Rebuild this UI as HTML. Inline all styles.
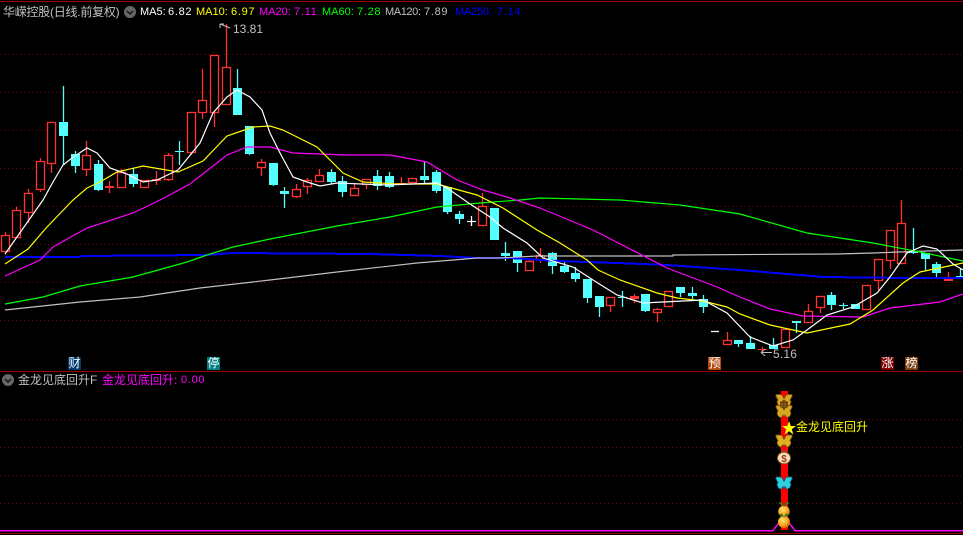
<!DOCTYPE html>
<html><head><meta charset="utf-8"><title>华嵘控股</title>
<style>
html,body{margin:0;padding:0;background:#000;width:963px;height:535px;overflow:hidden}
body{position:relative;font-family:"Liberation Sans","WenQuanYi Zen Hei","Noto Sans CJK SC",sans-serif}
svg.c{position:absolute;left:0;top:0}
.t{position:absolute;white-space:nowrap;font-size:12px;line-height:14px;color:#c0c0c0}
.n{position:absolute;white-space:nowrap;font-size:11px;line-height:14px}
.v{letter-spacing:.7px}
.b{position:absolute;width:13px;height:13px;color:#fff;font-size:12px;line-height:13px;text-align:center;top:357px}
</style></head><body>
<svg class="c" width="963" height="535" viewBox="0 0 963 535" xmlns="http://www.w3.org/2000/svg">
<defs>
<radialGradient id="o" cx="40%" cy="35%" r="70%"><stop offset="0" stop-color="#ffe070"/><stop offset=".6" stop-color="#f8a820"/><stop offset="1" stop-color="#d06000"/></radialGradient>
<g id="bf"><path d="M0-2L-2-6-4-6.500-8-6.500-8-4.500-6-1-7 1-6 4-3 6-1 3 0 5 1 3 3 6 6 4 7 1 6-1 8-4.500 8-6.500 4-6.500 2-6Z"/></g>
</defs>
<g shape-rendering="crispEdges">
<path d="M0 1.500H963M0 371.500H963" stroke="#a00000" fill="none"/>
<path d="M0 533.500H963" stroke="#a00000" fill="none"/>
<path d="M0 54.500H963M0 92.500H963M0 130.500H963M0 168.500H963M0 206.500H963M0 244.500H963M0 282.500H963M0 320.500H963M0 419.500H963M0 447.500H963M0 475.500H963M0 503.500H963" stroke="#7a0000" stroke-dasharray="1 3" fill="none"/>
</g>
<!-- red wicks -->
<path stroke="#ff3232" stroke-width="1.300" fill="none" d="M5.500 232V251M16.500 207V237M28.500 189V223M40.500 158V192M51.500 122V173M86.500 141V176M109.500 181V193M121.500 169V187M144.500 180V188M156.500 171V185M168.500 153V181M191.500 112V155M202.500 69V119M214.500 55V127M226.500 24V104M261.500 159V176M296.500 184V198M307.500 178V194M319.500 169V181M354.500 184V196M366.500 179V189M401.500 177V184M482.500 193V225M529.500 259V270M540.500 248V263M610.500 297V312M634.500 294V303M657.500 308V322M727.500 332V344M762.500 347V353M808.500 304V322M820.500 296V313M878.500 259V290M890.500 230V269M901.500 200V263M948.500 272V281"/>
<!-- red bodies -->
<g stroke="#ff3232" stroke-width="1.300" fill="#000">
<rect x="1.500" y="235.500" width="8" height="16"/><rect x="12.500" y="210.500" width="8" height="27"/><rect x="24.500" y="193.500" width="8" height="19"/><rect x="36.500" y="161.500" width="8" height="28"/><rect x="47.500" y="122.500" width="8" height="41"/>
<rect x="82.500" y="155.500" width="8" height="14"/><rect x="117.500" y="172.500" width="8" height="15"/><rect x="140.500" y="180.500" width="8" height="7"/><rect x="164.500" y="155.500" width="8" height="24"/>
<rect x="187.500" y="112.500" width="8" height="40"/><rect x="198.500" y="100.500" width="8" height="12"/><rect x="210.500" y="55.500" width="8" height="57"/><rect x="222.500" y="67.500" width="8" height="37"/><rect x="257.500" y="162.500" width="8" height="5"/>
<rect x="292.500" y="189.500" width="8" height="7"/><rect x="303.500" y="180.500" width="8" height="6"/><rect x="315.500" y="175.500" width="8" height="6"/><rect x="350.500" y="188.500" width="8" height="7"/><rect x="362.500" y="179.500" width="8" height="5"/><rect x="408.500" y="178.500" width="8" height="4"/>
<rect x="478.500" y="206.500" width="8" height="19"/><rect x="525.500" y="261.500" width="8" height="9"/><rect x="536.500" y="255.500" width="8" height="4"/><rect x="606.500" y="297.500" width="8" height="8"/><rect x="653.500" y="309.500" width="8" height="3"/><rect x="664.500" y="291.500" width="8" height="15"/>
<rect x="723.500" y="340.500" width="8" height="4"/><rect x="781.500" y="329.500" width="8" height="18"/><rect x="804.500" y="311.500" width="8" height="11"/><rect x="816.500" y="296.500" width="8" height="11"/><rect x="862.500" y="285.500" width="8" height="24"/><rect x="874.500" y="259.500" width="8" height="21"/><rect x="886.500" y="230.500" width="8" height="30"/><rect x="897.500" y="223.500" width="8" height="40"/>
</g>
<g shape-rendering="crispEdges">
<g fill="#ff3232"><rect x="105" y="186" width="9" height="2"/><rect x="152" y="179" width="9" height="2"/><rect x="397" y="183" width="9" height="1"/><rect x="630" y="296" width="9" height="3"/><rect x="758" y="349" width="9" height="1"/><rect x="944" y="279" width="9" height="2"/></g>
<g fill="#54ffff">
<rect x="59" y="122" width="9" height="14"/><rect x="71" y="154" width="9" height="12"/><rect x="94" y="164" width="9" height="26"/><rect x="129" y="174" width="9" height="10"/><rect x="175" y="151" width="9" height="1"/><rect x="233" y="88" width="9" height="27"/><rect x="245" y="126" width="9" height="28"/><rect x="269" y="163" width="9" height="22"/>
<rect x="280" y="191" width="9" height="3"/><rect x="327" y="172" width="9" height="10"/><rect x="338" y="181" width="9" height="11"/><rect x="373" y="176" width="9" height="10"/><rect x="385" y="176" width="9" height="11"/><rect x="420" y="176" width="9" height="4"/><rect x="432" y="172" width="9" height="19"/><rect x="443" y="187" width="9" height="25"/><rect x="455" y="214" width="9" height="5"/>
<rect x="490" y="208" width="9" height="32"/><rect x="501" y="253" width="9" height="3"/><rect x="513" y="251" width="9" height="12"/><rect x="548" y="253" width="9" height="13"/><rect x="560" y="266" width="9" height="6"/><rect x="571" y="273" width="9" height="6"/><rect x="583" y="279" width="9" height="19"/><rect x="595" y="296" width="9" height="11"/><rect x="618" y="297" width="9" height="1"/>
<rect x="641" y="294" width="9" height="17"/><rect x="676" y="287" width="9" height="6"/><rect x="688" y="293" width="9" height="3"/><rect x="699" y="299" width="9" height="8"/><rect x="734" y="340" width="9" height="4"/><rect x="746" y="343" width="9" height="6"/><rect x="769" y="345" width="9" height="4"/><rect x="792" y="321" width="9" height="2"/>
<rect x="827" y="295" width="9" height="10"/><rect x="839" y="305" width="9" height="1"/><rect x="851" y="304" width="9" height="5"/><rect x="909" y="252" width="9" height="1"/><rect x="921" y="253" width="9" height="6"/><rect x="932" y="264" width="9" height="9"/><rect x="956" y="276" width="7" height="1"/>
</g>
</g>
<!-- cyan wicks -->
<path stroke="#54ffff" stroke-width="1.300" fill="none" d="M63.500 86V165M75.500 151V173M98.500 160V191M133.500 168V187M179.500 141V165M237.500 69V115M249.500 126V155M273.500 163V186M284.500 187V208M331.500 169V184M342.500 176V197M377.500 170V190M389.500 172V188M424.500 162V183M436.500 170V193M447.500 187V214M459.500 211V224M494.500 208V240M505.500 242V261M517.500 251V272M552.500 252V274M564.500 262V273M575.500 267V282M587.500 279V303M599.500 296V317M622.500 291V307M645.500 294V312M680.500 287V297M692.500 287V299M703.500 295V313M738.500 340V347M750.500 336V349M773.500 338V349M796.500 321V333M831.500 292V310M843.500 303V309M855.500 304V309M913.500 228V254M925.500 253V270M936.500 262V278M960.500 268V278"/>
<path d="M467 221.500H476M471.500 216V226M711 331.500H719" stroke="#fff" stroke-width="1.300" fill="none"/>
<!-- MAs -->
<g fill="none" stroke-width="1.200">
<polyline stroke="#0000ff" stroke-width="2" shape-rendering="crispEdges" points="5,257 80,257 82,256 207,255 232,253 370,254 440,256 477,258 510,258 557,261 617,263 667,265 740,270 823,277 907,278 963,278"/>
<polyline stroke="#c0c0c0" points="5,310 80,302 140,297 200,288 270,280 337,272 417,263 477,258 500,258 537,256 673,256 673,255 837,254 873,253 927,251 963,250"/>
<polyline stroke="#00ff00" points="5,304 43,297 80,286 133,277 187,262 207,255 233,247 270,239 337,226 390,217 437,207 480,203 520,200 540,198 620,200 680,205 740,214 807,233 873,243 920,252 963,261"/>
<polyline stroke="#ff00ff" points="5,276 40,260 53,247 87,228 133,213 160,200 190,184 227,155 247,147 270,147 293,153 347,155 390,155 427,162 457,180 483,190 510,198 540,208 593,230 667,268 717,287 740,297 770,309 803,316 863,317 890,308 940,302 963,294"/>
<polyline stroke="#ffff00" points="5,264 28,249 47,227 73,200 87,188 100,182 117,172 143,166 178,172 203,161 227,136 253,127 270,126 283,130 317,147 343,173 363,182 397,184 437,184 477,195 503,208 537,230 560,243 587,260 598,270 620,280 657,293 677,298 703,301 727,307 740,314 770,325 807,333 850,324 873,310 903,283 920,272 963,263"/>
<polyline stroke="#ffffff" points="5,254 43,200 53,182 63,165 72,158 87,148 97,153 110,168 127,174 143,182 157,180 178,170 200,143 213,113 227,97 237,90 250,97 262,110 270,133 280,153 293,177 307,182 320,186 337,183 387,185 437,183 447,188 470,204 490,217 503,228 527,243 543,258 573,267 593,280 617,295 643,303 663,302 703,300 727,313 750,337 773,346 793,340 807,330 827,315 853,307 877,293 890,277 907,253 923,246 937,249 953,264 963,270"/>
</g>
<!-- arrows -->
<path d="M220 24L230 28M220 24V28M220 24H224M761 352.500H772M761 352.500L765 349M761 352.500L765 356" stroke="#c0c0c0" fill="none"/>
<!-- header circles -->
<circle cx="130" cy="12" r="6" fill="#666"/><path d="M127 11l3 3 3-3" stroke="#111" stroke-width="1.500" fill="none"/>
<circle cx="8" cy="380" r="6" fill="#666"/><path d="M5 379l3 3 3-3" stroke="#111" stroke-width="1.500" fill="none"/>
<!-- lower indicator -->
<g shape-rendering="crispEdges"><rect x="781" y="391" width="7" height="139" fill="#ff0000"/>
<polyline points="0,530.500 773,530.500 778,524 790,524 795,530.500 963,530.500" fill="none" stroke="#ff00ff" stroke-width="1.500"/></g>
<use href="#bf" x="784" y="401" fill="#d8a820" stroke="#7a4c10" stroke-width=".8"/>
<use href="#bf" x="784" y="412" fill="#d8a820" stroke="#7a4c10" stroke-width=".8"/>
<path d="M780 402l4-2 4 2 0 5-4 2-4-2z" fill="#5a3a10"/>
<path d="M780 404h8M780 406h8M782 401v7M785 401v7" stroke="#a87a20" stroke-width=".6"/>
<use href="#bf" x="784" y="441.500" fill="#e0b020" stroke="#7a4c10" stroke-width=".8"/>
<use href="#bf" x="784" y="483.500" fill="#30d0e0" stroke="#106070" stroke-width=".8"/>
<polygon points="789,421 790.800,426 796,426 791.800,429.300 793.400,434.500 789,431.300 784.600,434.500 786.200,429.300 782,426 787.200,426" fill="#ffff00"/>
<path d="M781 449l3 2 3-2-1 4h-4z" fill="#b04030"/>
<ellipse cx="784" cy="458" rx="6.500" ry="5.800" fill="#f5e2b8" stroke="#8a5a20"/>
<text x="784" y="462" font-size="10" font-weight="bold" text-anchor="middle" fill="#a03828" font-family="Liberation Sans,sans-serif">$</text>
<circle cx="784" cy="511.500" r="5.800" fill="url(#o)"/>
<path d="M784 507l-6-4.500 4-.5zM784 507l6-4.500-4-.5z" fill="#2f7a20"/>
<circle cx="784" cy="522" r="6" fill="url(#o)"/>
<path d="M784 517.500l-6-3 4-1zM784 517.500l6-3-4-1z" fill="#2f7a20"/>
</svg>
<div class="t" style="left:3px;top:5px;letter-spacing:-.25px">华嵘控股(日线.前复权)</div>
<div class="n" style="left:140px;top:5px;color:#fff">MA5:</div><div class="n v" style="left:168px;top:5px;color:#fff">6.82</div>
<div class="n" style="left:196px;top:5px;color:#ff0">MA10:</div><div class="n v" style="left:231px;top:5px;color:#ff0">6.97</div>
<div class="n" style="left:259px;top:5px;color:#f0f">MA20:</div><div class="n v" style="left:294px;top:5px;color:#f0f">7.11</div>
<div class="n" style="left:322px;top:5px;color:#0f0">MA60:</div><div class="n v" style="left:357px;top:5px;color:#0f0">7.28</div>
<div class="n" style="left:385px;top:5px;color:#c0c0c0;letter-spacing:-.4px">MA120:</div><div class="n v" style="left:424px;top:5px;color:#c0c0c0">7.89</div>
<div class="n" style="left:455px;top:5px;color:#00f;letter-spacing:-.2px">MA250:</div><div class="n v" style="left:497px;top:5px;color:#00f">7.14</div>
<div class="n" style="left:233px;top:22px;color:#c0c0c0;font-size:12px">13.81</div>
<div class="n" style="left:773px;top:347px;color:#c0c0c0;font-size:12px;letter-spacing:.2px">5.16</div>
<div class="b" style="left:68px;background:#003a6c">财</div>
<div class="b" style="left:207px;background:#008080">停</div>
<div class="b" style="left:708px;background:#b84a10">预</div>
<div class="b" style="left:881px;background:#800000">涨</div>
<div class="b" style="left:905px;background:#7a4010">榜</div>
<div class="t" style="left:18px;top:373px">金龙见底回升F</div>
<div class="t" style="left:102px;top:373px;color:#f0f">金龙见底回升:</div>
<div class="n v" style="left:181px;top:373px;color:#f0f">0.00</div>
<div class="t" style="left:796px;top:420px;color:#ff0">金龙见底回升</div>
</body></html>
